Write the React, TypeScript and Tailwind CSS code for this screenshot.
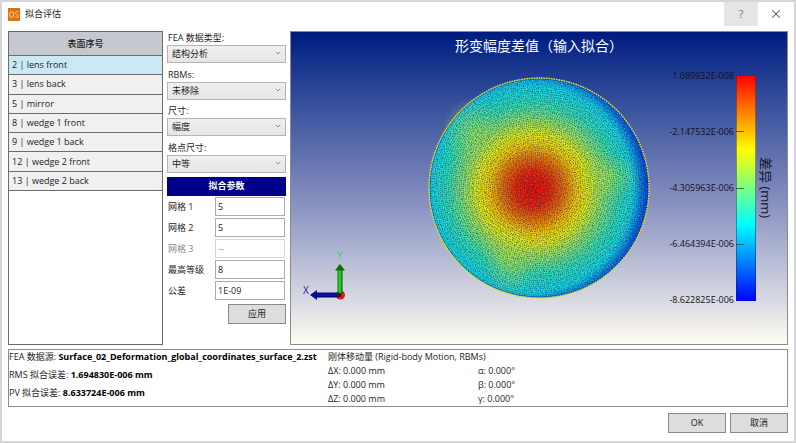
import { useState } from 'react';
import clsx from 'clsx';
import { ChevronDown, X } from 'lucide-react';

const surfaces = [
  '2 | lens front',
  '3 | lens back',
  '5 | mirror',
  '8 | wedge 1 front',
  '9 | wedge 1 back',
  '12 | wedge 2 front',
  '13 | wedge 2 back',
];

const selects = [
  { id: 'fea-type', label: 'FEA 数据类型:', value: '结构分析' },
  { id: 'rbms', label: 'RBMs:', value: '未移除' },
  { id: 'dimension', label: '尺寸:', value: '幅度' },
  { id: 'grid-size', label: '格点尺寸:', value: '中等' },
];

const params = [
  { id: 'grid-1', label: '网格 1', value: '5' },
  { id: 'grid-2', label: '网格 2', value: '5' },
  { id: 'grid-3', label: '网格 3', value: '--', disabled: true },
  { id: 'max-order', label: '最高等级', value: '8' },
  { id: 'tolerance', label: '公差', value: '1E-09' },
];

const results = [
  { label: 'FEA 数据源:', value: 'Surface_02_Deformation_global_coordinates_surface_2.zst' },
  { label: 'RMS 拟合误差:', value: '1.694830E-006 mm' },
  { label: 'PV 拟合误差:', value: '8.633724E-006 mm' },
];

const motions = ['ΔX: 0.000 mm', 'α: 0.000°', 'ΔY: 0.000 mm', 'β: 0.000°', 'ΔZ: 0.000 mm', 'γ: 0.000°'];

const ticks = ['1.089932E-008', '-2.147532E-006', '-4.305963E-006', '-6.464394E-006', '-8.622825E-006'];

// Mesh nodes sit on concentric rings, slightly jittered
function buildMesh(step: number, seed: number, jitter: number) {
  let s = seed;
  const rand = () => {
    s = (s * 16807) % 2147483647;
    return s / 2147483647;
  };
  let d = '';
  for (let r = step; r < 109; r += step) {
    const n = Math.floor((2 * Math.PI * r) / step);
    const offset = rand() * Math.PI;
    for (let i = 0; i < n; i++) {
      const a = offset + ((i + (rand() - 0.5) * 0.4) / n) * Math.PI * 2;
      const rr = r + (rand() - 0.5) * jitter;
      d += `M${(110.5 + rr * Math.cos(a)).toFixed(1)} ${(111 + rr * Math.sin(a)).toFixed(1)}h1`;
    }
  }
  return d;
}

const darkMesh = buildMesh(2.1, 77, 1);
const sparseMesh = buildMesh(4.7, 4242, 4);
const lightMesh = buildMesh(4.3, 1234, 3);

function Disc() {
  return (
    <svg viewBox="0 0 222 222" className="w-full" aria-hidden="true">
      <defs>
        <radialGradient id="field" gradientUnits="userSpaceOnUse" cx="105" cy="112" r="116">
          <stop offset="0" stopColor="#e00c0c" />
          <stop offset="0.15" stopColor="#e0260e" />
          <stop offset="0.27" stopColor="#e2700c" />
          <stop offset="0.38" stopColor="#eac40c" />
          <stop offset="0.47" stopColor="#dce41c" />
          <stop offset="0.6" stopColor="#84dc70" />
          <stop offset="0.74" stopColor="#2ed8b8" />
          <stop offset="0.88" stopColor="#12d0e4" />
          <stop offset="1" stopColor="#109ce8" />
        </radialGradient>
        <radialGradient id="edge" gradientUnits="userSpaceOnUse" cx="98" cy="111" r="124">
          <stop offset="0.86" stopColor="#0838e0" stopOpacity="0" />
          <stop offset="1" stopColor="#0424d0" stopOpacity="0.9" />
        </radialGradient>
        <radialGradient id="lobe">
          <stop offset="0" stopColor="#b8e640" stopOpacity="0.6" />
          <stop offset="1" stopColor="#b8e640" stopOpacity="0" />
        </radialGradient>
      </defs>
      <circle cx="111" cy="111" r="110" fill="url(#field)" />
      <ellipse cx="44" cy="56" rx="30" ry="36" fill="url(#lobe)" />
      <ellipse cx="82" cy="182" rx="26" ry="40" fill="url(#lobe)" />
      <ellipse cx="178" cy="100" rx="34" ry="24" fill="url(#lobe)" />
      <circle cx="111" cy="111" r="110" fill="url(#edge)" />
      <path d={darkMesh} stroke="#10202c" strokeWidth="1" strokeOpacity="0.58" />
      <path d={sparseMesh} stroke="#10202c" strokeWidth="1" strokeOpacity="0.45" />
      <path d={lightMesh} stroke="#ffffff" strokeWidth="1" strokeOpacity="0.25" />
      <circle cx="111" cy="111" r="109" fill="none" stroke="#0a3a8c" strokeOpacity="0.7" />
      <circle cx="111" cy="111" r="110" fill="none" stroke="#e8e020" strokeWidth="1.4" strokeDasharray="1.6 0.9" />
    </svg>
  );
}

function Triad() {
  return (
    <svg viewBox="0 -4 50 56" className="h-[56px] w-[50px]" role="img" aria-label="XY">
      <defs>
        <linearGradient id="shaftY">
          <stop offset="0" stopColor="#067806" />
          <stop offset="0.45" stopColor="#2ce42c" />
          <stop offset="1" stopColor="#045c04" />
        </linearGradient>
        <linearGradient id="shaftX" x2="0" y2="1">
          <stop offset="0" stopColor="#000a70" />
          <stop offset="0.5" stopColor="#1010c0" />
          <stop offset="1" stopColor="#000050" />
        </linearGradient>
      </defs>
      <circle cx="39.500" cy="45" r="4.500" fill="#e01c1c" />
      <path d="M36.500 19h5v25h-5z" fill="url(#shaftY)" />
      <path d="M39 14l5 6.500h-10z" fill="#087008" />
      <path d="M14 42.500h24v5H14z" fill="url(#shaftX)" />
      <path d="M9 45l7-5v10z" fill="#000c90" />
      <path d="M36.500 43h4v4h-4z" fill="#501010" />
      <text x="36" y="9" className="fill-[#3ccc70] text-[10px]">Y</text>
      <text x="2" y="44" className="fill-[#1c1ca8] text-[10px]">X</text>
    </svg>
  );
}

function Legend() {
  return (
    <div className="flex items-center justify-end pr-3">
      <div className="-my-1 flex h-[236px] flex-col justify-between text-right text-[#10101c]">
        {ticks.map(t => (
          <span key={t} className="h-3 leading-3">{t}</span>
        ))}
      </div>
      <svg viewBox="0 0 20 226" className="ml-0.5 h-[226px] w-5" aria-hidden="true">
        <defs>
          <linearGradient id="scale" x2="0" y2="1">
            <stop offset="0" stopColor="#ff0000" />
            <stop offset="0.33" stopColor="#ffff00" />
            <stop offset="0.66" stopColor="#00ffff" />
            <stop offset="1" stopColor="#0000ff" />
          </linearGradient>
        </defs>
        <path d="M0 0h20v226H0z" fill="url(#scale)" />
        <path d="M0 .5h20M19.500 0v226M.5 0v226" stroke="#202040" strokeOpacity="0.45" fill="none" />
        <path d="M0 56.500h8M0 113.500h8M0 169.500h8" stroke="#303030" strokeOpacity="0.7" />
      </svg>
      <span className="ml-px text-[13px] leading-[18px] text-[#141428] [text-orientation:sideways] [writing-mode:vertical-rl]">
        差异 (mm)
      </span>
    </div>
  );
}

const buttonClass = 'h-5 w-[58px] border border-[#8a8a8a] bg-[#dddddd] hover:bg-[#e5f1fb]';

export default function App() {
  const [selected, setSelected] = useState(0);

  return (
    <div className="flex min-h-screen flex-col border-2 border-[#d5d6da] bg-white font-['Open_Sans','Noto_Sans_CJK_SC',sans-serif] text-[9px] leading-3 text-[#1c1c1c]">
      <header className="flex h-6 items-center pl-1.5">
        <svg viewBox="0 0 12 13" className="h-[13px] w-3" role="img" aria-label="OS">
          <path d="M0 0h12v13H0z" fill="#d9730d" />
          <ellipse cx="3.600" cy="6.500" rx="2" ry="3" fill="none" stroke="#ffd9a0" />
          <path d="M10.500 4.300C9.800 3.200 7.300 3.300 7.300 5s3.200 1.300 3.200 3-2.600 2-3.500.8" fill="none" stroke="#ffc070" />
        </svg>
        <h1 className="ml-[5px]">拟合评估</h1>
        <button className="ml-auto h-6 w-[34px] bg-[#e5e5e5] text-[11px] text-[#777]">?</button>
        <button className="flex h-6 w-9 items-center justify-center text-[#555]" aria-label="关闭">
          <X className="h-3.5 w-3.5" strokeWidth={1.8} />
        </button>
      </header>

      <main className="flex flex-1 flex-col px-1.5 pt-[5px] pb-2">
        <div className="flex flex-1">
          <div className="w-[155px] border border-[#6c6c6c]">
            <table className="h-[159px] w-full border-separate border-spacing-0">
              <thead>
                <tr>
                  <th className="h-6 border-b border-[#6c6c6c] bg-[#c6c8d0] p-0 font-medium">表面序号</th>
                </tr>
              </thead>
              <tbody>
                {surfaces.map((name, i) => (
                  <tr key={name} onClick={() => setSelected(i)}>
                    <td
                      className={clsx(
                        'border-b border-[#6c6c6c] px-[3px] py-0',
                        i === selected ? 'bg-[#cbe8f6]' : 'bg-[#f0f0f0]',
                      )}
                    >
                      {name}
                    </td>
                  </tr>
                ))}
              </tbody>
            </table>
          </div>

          <form className="ml-1 w-[119px]" onSubmit={e => e.preventDefault()}>
            <div className="flex h-[146px] flex-col justify-between pt-px pb-1">
              {selects.map(s => (
                <div key={s.id} className="relative">
                  <label htmlFor={s.id} className="block h-[13px] pl-px">{s.label}</label>
                  <select
                    id={s.id}
                    className="block h-[18px] w-full appearance-none border border-[#b4b4b4] bg-linear-to-b from-[#f0f0f0] to-[#e5e5e5] px-1"
                  >
                    <option>{s.value}</option>
                  </select>
                  <ChevronDown className="pointer-events-none absolute right-1 bottom-1.5 h-2 w-2 text-[#606060]" />
                </div>
              ))}
            </div>
            <h2 className="h-[19px] bg-[#00008b] text-center leading-[18px] font-bold text-white">拟合参数</h2>
            <div className="mt-px flex flex-col gap-0.5 pr-px">
              {params.map(p => (
                <div key={p.id} className={clsx('flex items-center', p.disabled && 'text-[#888]')}>
                  <label htmlFor={p.id} className="flex-1 pl-px">{p.label}</label>
                  <input
                    id={p.id}
                    defaultValue={p.value}
                    disabled={p.disabled}
                    className={clsx(
                      'h-[19px] w-[70px] border px-0.5',
                      p.disabled ? 'border-[#d8d8d8]' : 'border-[#ababab]',
                    )}
                  />
                </div>
              ))}
            </div>
            <div className="mt-1 flex justify-end">
              <button type="submit" className={buttonClass}>应用</button>
            </div>
          </form>

          <section className="ml-1 flex-1 border border-[#8c8c90] bg-linear-to-b from-[#001a80] via-[#7c86ba] to-[#fffcf0]">
            <h2 className="h-[42px] pt-1 text-center text-[14px] leading-5 text-white">形变幅度差值（输入拟合）</h2>
            <div className="grid grid-cols-[1fr_222px_1fr]">
              <div className="flex items-end pl-2.5">
                <Triad />
              </div>
              <div className="pt-[3px]">
                <Disc />
              </div>
              <Legend />
            </div>
          </section>
        </div>

        <section className="mt-1 flex h-[58px] border border-[#8c8c8c]">
          <div className="flex w-[319px] flex-col gap-1.5 pt-px">
            {results.map(r => (
              <p key={r.label} className="whitespace-nowrap">
                {r.label} <b className="text-black">{r.value}</b>
              </p>
            ))}
          </div>
          <div className="leading-[14px]">
            <h3>刚体移动量 (Rigid-body Motion, RBMs)</h3>
            <div className="grid grid-cols-[150px_auto]">
              {motions.map(m => (
                <span key={m}>{m}</span>
              ))}
            </div>
          </div>
        </section>

        <footer className="mt-1.5 flex justify-end gap-1">
          <button className={buttonClass}>OK</button>
          <button className={buttonClass}>取消</button>
        </footer>
      </main>
    </div>
  );
}
